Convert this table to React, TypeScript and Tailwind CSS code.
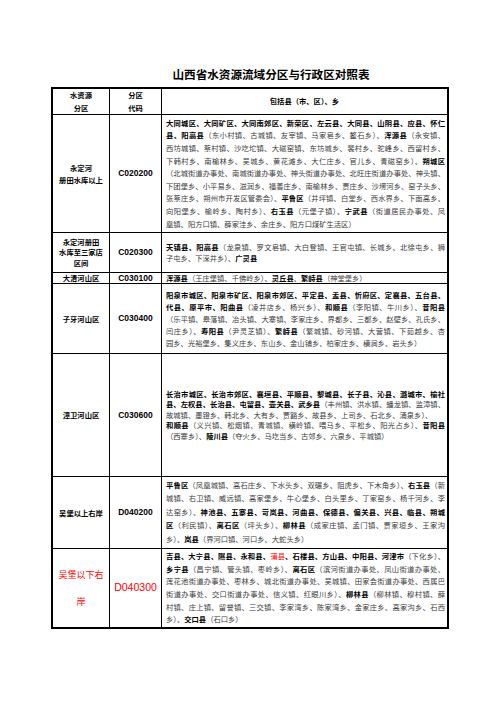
import type { FC } from 'react';

type Row = {
    h: string;
    lh: string;
    c1: string[];
    c1lh: string;
    code: string;
    red?: boolean;
    lines: string[];
};

// "**" = bold county name, "{{}}" = red text, leading "<" = line is not justified
const rows: Row[] = [
    {
        h: 'h-[118px]',
        lh: 'leading-[12.6px]',
        c1: ['永定河', '册田水库以上'],
        c1lh: 'leading-[12px]',
        code: 'C020200',
        lines: [
            '**大同城区、大同矿区、大同南郊区、新荣区、左云县、大同县、山阴县、应县、怀仁**',
            '**县、阳高县**（东小村镇、古城镇、友宰镇、马家皂乡、鳌石乡）、**浑源县**（永安镇、',
            '西坊城镇、蔡村镇、沙圪坨镇、大磁窑镇、东坊城乡、裴村乡、驼峰乡、西留村乡、',
            '下韩村乡、南榆林乡、吴城乡、黄花滩乡、大仁庄乡、官儿乡、青磁窑乡）、**朔城区**',
            '（北城街道办事处、南城街道办事处、神头街道办事处、北旺庄街道办事处、神头镇、',
            '下团堡乡、小平易乡、滋润乡、福善庄乡、南榆林乡、贾庄乡、沙塄河乡、窑子头乡、',
            '张蔡庄乡、朔州市开发区管委会）、**平鲁区**（井坪镇、白堂乡、西水界乡、下面高乡、',
            '向阳堡乡、榆岭乡、陶村乡）、**右玉县**（元堡子镇）、**宁武县**（街道居民办事处、凤',
            '凰镇、阳方口镇、薛家洼乡、余庄乡、阳方口煤矿生活区）',
        ],
    },
    {
        h: 'h-[40px]',
        lh: 'leading-[10.5px]',
        c1: ['永定河册田', '水库至三家店', '区间'],
        c1lh: 'leading-[10.5px]',
        code: 'C020300',
        lines: [
            '**天镇县、阳高县**（龙泉镇、罗文皂镇、大白登镇、王官屯镇、长城乡、北徐屯乡、狮',
            '子屯乡、下深井乡）、**广灵县**',
        ],
    },
    {
        h: 'h-[11px]',
        lh: 'leading-[9px]',
        c1: ['大清河山区'],
        c1lh: 'leading-[9px]',
        code: 'C030100',
        lines: ['**浑源县**（王庄堡镇、千佛岭乡）、**灵丘县**、**繁峙县**（神堂堡乡）'],
    },
    {
        h: 'h-[70px]',
        lh: 'leading-[12px]',
        c1: ['子牙河山区'],
        c1lh: 'leading-[12px]',
        code: 'C030400',
        lines: [
            '**阳泉市城区、阳泉市矿区、阳泉市郊区、平定县、盂县、忻府区、定襄县、五台县、**',
            '**代县、原平市、阳曲县**（凌井店乡、杨兴乡）、**和顺县**（李阳镇、牛川乡）、**昔阳县**',
            '（乐平镇、皋落镇、冶头镇、大寨镇、李家庄乡、界都乡、三都乡、赵壁乡、孔氏乡、',
            '闫庄乡）、**寿阳县**（尹灵芝镇）、**繁峙县**（繁城镇、砂河镇、大营镇、下茹越乡、杏',
            '园乡、光裕堡乡、集义庄乡、东山乡、金山铺乡、柏家庄乡、横涧乡、岩头乡）',
        ],
    },
    {
        h: 'h-[123px]',
        lh: 'leading-[10.5px]',
        c1: ['漳卫河山区'],
        c1lh: 'leading-[10px]',
        code: 'C030600',
        lines: [
            '**长治市城区、长治市郊区、襄垣县、平顺县、黎城县、长子县、沁县、潞城市、榆社**',
            '**县、左权县、长治县、屯留县、壶关县、武乡县**（丰州镇、洪水镇、蟠龙镇、监漳镇、',
            '<故城镇、墨镫乡、韩北乡、大有乡、贾豁乡、故县乡、上司乡、石北乡、涌泉乡）、',
            '**和顺县**（义兴镇、松烟镇、青城镇、横岭镇、喂马乡、平松乡、阳光占乡）、**昔阳县**',
            '（西寨乡）、**陵川县**（夺火乡、马圪当乡、古郊乡、六泉乡、平城镇）',
        ],
    },
    {
        h: 'h-[72px]',
        lh: 'leading-[13.6px]',
        c1: ['吴堡以上右岸'],
        c1lh: 'leading-[12px]',
        code: 'D040200',
        lines: [
            '**平鲁区**（凤凰城镇、高石庄乡、下水头乡、双碾乡、阻虎乡、下木角乡）、**右玉县**（新',
            '城镇、右卫镇、威远镇、高家堡乡、牛心堡乡、白头里乡、丁家窑乡、杨千河乡、李',
            '达窑乡）、**神池县、五寨县、岢岚县、河曲县、保德县、偏关县、兴县、临县、朔城**',
            '**区**（利民镇）、**离石区**（坪头乡）、**柳林县**（成家庄镇、孟门镇、贾家垣乡、王家沟',
            '乡）、**岚县**（界河口镇、河口乡、大蛇头乡）',
        ],
    },
    {
        h: 'h-[78px]',
        lh: 'leading-[12.7px]',
        c1: ['吴堡以下右', '岸'],
        c1lh: 'leading-[27px]',
        code: 'D040300',
        red: true,
        lines: [
            '**吉县、大宁县、隰县、永和县、**{{蒲县}}**、石楼县、方山县、中阳县、河津市**（下化乡）、',
            '**乡宁县**（昌宁镇、管头镇、枣岭乡）、**离石区**（滨河街道办事处、凤山街道办事处、',
            '莲花池街道办事处、枣林乡、城北街道办事处、吴城镇、田家会街道办事处、西属巴',
            '街道办事处、交口街道办事处、信义镇、红眼川乡）、**柳林县**（柳林镇、穆村镇、薛',
            '村镇、庄上镇、留誉镇、三交镇、李家湾乡、陈家湾乡、金家庄乡、高家沟乡、石西',
            '乡）、**交口县**（石口乡）',
        ],
    },
];

const Rich: FC<{ text: string }> = ({ text }) => {
    const parts = text.split(/(\*\*.+?\*\*|\{\{.+?\}\})/g).filter(Boolean);
    return (
        <>
            {parts.map((p, i) =>
                p.startsWith('**') ? (
                    <span key={i} className="font-bold text-black">
                        {p.slice(2, -2)}
                    </span>
                ) : p.startsWith('{{') ? (
                    <span key={i} className="text-[#ff0000]">
                        {p.slice(2, -2)}
                    </span>
                ) : (
                    <span key={i}>{p}</span>
                ),
            )}
        </>
    );
};

const App: FC = () => {
    return (
        <div className="w-[496px] h-[702px] bg-white font-['Noto_Sans_CJK_SC',sans-serif] text-[#3a3a3a]">
            <div className="pt-[66px] pl-[46px] text-center text-[11.6px] leading-[16px] font-bold text-black">
                山西省水资源流域分区与行政区对照表
            </div>
            <div className="ml-[51px] mt-[5px] w-[398px] border-2 border-black">
                {/* header */}
                <div className="flex h-[26px] border-b border-black text-[7.3px] font-bold text-black">
                    <div className="w-[57px] border-r border-black flex flex-col items-center justify-center leading-[13px]">
                        <div>水资源</div>
                        <div>分区</div>
                    </div>
                    <div className="w-[52px] border-r border-black flex flex-col items-center justify-center leading-[13px]">
                        <div>分区</div>
                        <div>代码</div>
                    </div>
                    <div className="flex-1 flex items-center justify-center">包括县（市、区）、乡</div>
                </div>

                {rows.map((r, ri) => (
                    <div
                        key={r.code}
                        className={`flex ${r.h} ${ri < rows.length - 1 ? 'border-b border-black' : ''}`}>
                        <div
                            className={`w-[57px] shrink-0 border-r border-black flex flex-col items-center justify-center ${r.c1lh} ${
                                r.red ? 'text-[9px] text-[#ff0000]' : 'text-[7.3px] font-bold text-black'
                            }`}>
                            {r.c1.map((t) => (
                                <div key={t} className="whitespace-nowrap">
                                    {t}
                                </div>
                            ))}
                        </div>
                        <div
                            className={`w-[52px] shrink-0 border-r border-black flex items-center justify-center font-['Liberation_Sans',sans-serif] ${
                                r.red ? 'text-[10.5px] text-[#ff0000]' : 'text-[8.5px] font-bold text-black'
                            }`}>
                            {r.code}
                        </div>
                        <div className={`flex-1 flex flex-col justify-center pl-[4px] pr-[2px] text-[7.3px] ${r.lh}`}>
                            {r.lines.map((l, li) => {
                                const left = l.startsWith('<') || li === r.lines.length - 1;
                                const text = l.startsWith('<') ? l.slice(1) : l;
                                return (
                                    <div
                                        key={li}
                                        className={
                                            left
                                                ? 'whitespace-nowrap'
                                                : 'text-justify [text-align-last:justify]'
                                        }>
                                        <Rich text={text} />
                                    </div>
                                );
                            })}
                        </div>
                    </div>
                ))}
            </div>
        </div>
    );
};

export default App;
